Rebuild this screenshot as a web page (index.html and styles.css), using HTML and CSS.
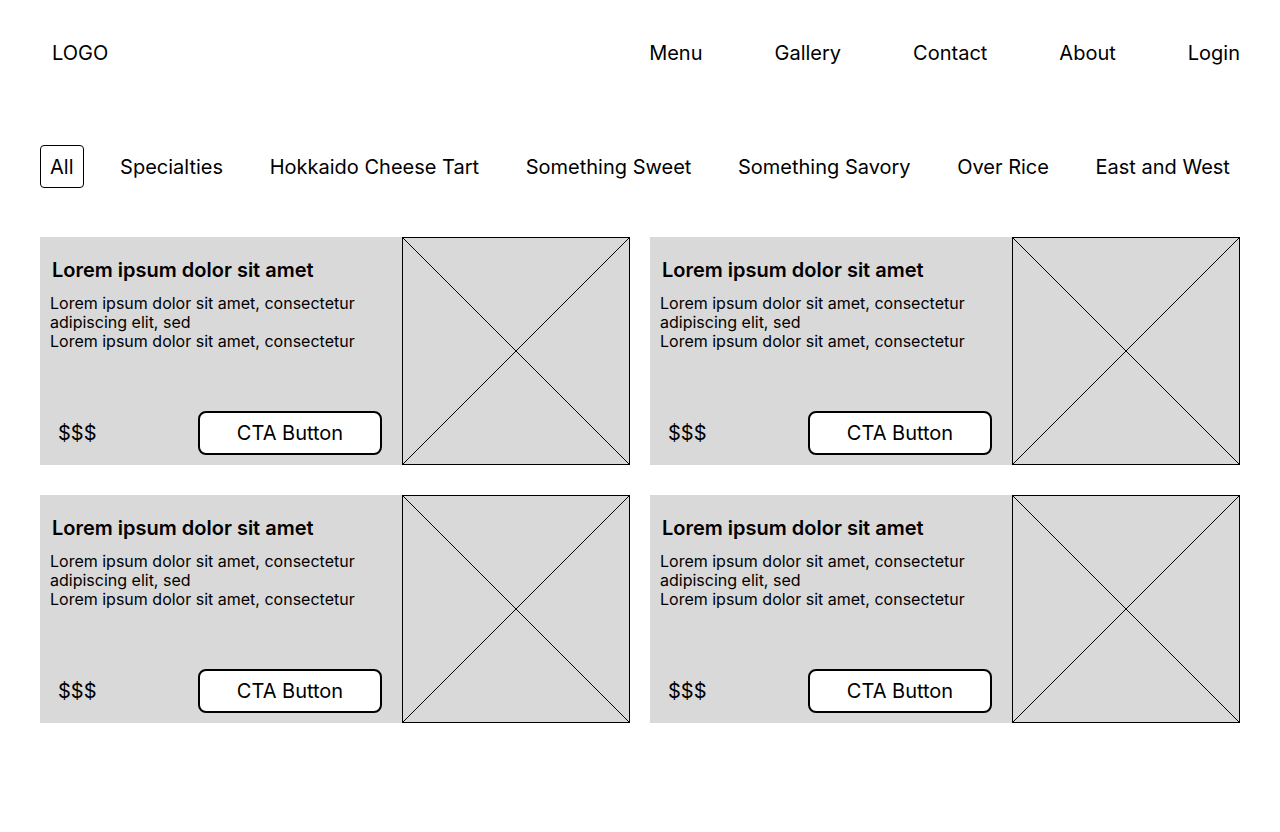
FILE: index.html
```html
<!DOCTYPE html>
<html lang="en">
<head>
<meta charset="utf-8">
<title>Menu</title>
<link rel="stylesheet" href="styles.css">
</head>
<body>
<div class="page">
  <header class="header">
    <div class="logo">LOGO</div>
    <nav class="nav">
      <a href="#">Menu</a>
      <a href="#">Gallery</a>
      <a href="#">Contact</a>
      <a href="#">About</a>
      <a href="#">Login</a>
    </nav>
  </header>

  <div class="filters">
    <span class="filter active">All</span>
    <span class="filter">Specialties</span>
    <span class="filter">Hokkaido Cheese Tart</span>
    <span class="filter">Something Sweet</span>
    <span class="filter">Something Savory</span>
    <span class="filter">Over Rice</span>
    <span class="filter">East and West</span>
  </div>

  <div class="grid">
    <div class="card">
      <div class="info">
        <h2 class="title">Lorem ipsum dolor sit amet</h2>
        <p class="desc">Lorem ipsum dolor sit amet, consectetur<br>adipiscing elit, sed<br>Lorem ipsum dolor sit amet, consectetur</p>
        <div class="foot"><span class="price">$$$</span><button class="cta">CTA Button</button></div>
      </div>
      <div class="pic"><svg viewBox="0 0 100 100" preserveAspectRatio="none"><line x1="0" y1="0" x2="100" y2="100"/><line x1="100" y1="0" x2="0" y2="100"/></svg></div>
    </div>
    <div class="card">
      <div class="info">
        <h2 class="title">Lorem ipsum dolor sit amet</h2>
        <p class="desc">Lorem ipsum dolor sit amet, consectetur<br>adipiscing elit, sed<br>Lorem ipsum dolor sit amet, consectetur</p>
        <div class="foot"><span class="price">$$$</span><button class="cta">CTA Button</button></div>
      </div>
      <div class="pic"><svg viewBox="0 0 100 100" preserveAspectRatio="none"><line x1="0" y1="0" x2="100" y2="100"/><line x1="100" y1="0" x2="0" y2="100"/></svg></div>
    </div>
    <div class="card">
      <div class="info">
        <h2 class="title">Lorem ipsum dolor sit amet</h2>
        <p class="desc">Lorem ipsum dolor sit amet, consectetur<br>adipiscing elit, sed<br>Lorem ipsum dolor sit amet, consectetur</p>
        <div class="foot"><span class="price">$$$</span><button class="cta">CTA Button</button></div>
      </div>
      <div class="pic"><svg viewBox="0 0 100 100" preserveAspectRatio="none"><line x1="0" y1="0" x2="100" y2="100"/><line x1="100" y1="0" x2="0" y2="100"/></svg></div>
    </div>
    <div class="card">
      <div class="info">
        <h2 class="title">Lorem ipsum dolor sit amet</h2>
        <p class="desc">Lorem ipsum dolor sit amet, consectetur<br>adipiscing elit, sed<br>Lorem ipsum dolor sit amet, consectetur</p>
        <div class="foot"><span class="price">$$$</span><button class="cta">CTA Button</button></div>
      </div>
      <div class="pic"><svg viewBox="0 0 100 100" preserveAspectRatio="none"><line x1="0" y1="0" x2="100" y2="100"/><line x1="100" y1="0" x2="0" y2="100"/></svg></div>
    </div>
  </div>
</div>
</body>
</html>
```
FILE: styles.css
```css
* { box-sizing: border-box; }
html, body { margin: 0; padding: 0; background: #fff; }
body {
  font-family: Inter, "Noto Sans", "Liberation Sans", sans-serif;
  color: #000;
}
.page { padding: 0 40px; }

.header {
  display: flex;
  justify-content: space-between;
  align-items: center;
  padding-top: 41px;
  font-size: 20px;
  line-height: 24px;
}
.logo { margin-left: 12px; }
.nav { display: flex; gap: 72px; }
.nav a { color: #000; text-decoration: none; }

.filters {
  display: flex;
  justify-content: space-between;
  margin-top: 80px;
  font-size: 20px;
  line-height: 22px;
}
.filter {
  padding: 10px 9px 9px;
  border: 1px solid transparent;
  border-radius: 4px;
}
.filter.active { border-color: #000; }

.grid {
  display: grid;
  grid-template-columns: 1fr 1fr;
  gap: 30px 20px;
  margin-top: 49px;
}
.card {
  display: flex;
  height: 228px;
  background: #d9d9d9;
}
.info {
  flex: 1;
  display: flex;
  flex-direction: column;
  padding: 21px 20px 10px 10px;
}
.title {
  margin: 0 0 12px 2px;
  font-size: 20px;
  line-height: 24px;
  font-weight: 600;
}
.desc {
  margin: 0;
  font-size: 16px;
  line-height: 19px;
}
.foot {
  margin-top: auto;
  display: flex;
  justify-content: space-between;
  align-items: center;
}
.price { margin-left: 8px; font-size: 20px; line-height: 24px; }
.cta {
  width: 184px;
  height: 44px;
  background: #fff;
  border: 2px solid #000;
  border-radius: 8px;
  font-family: inherit;
  font-size: 20px;
  color: #000;
  padding: 0;
}
.pic {
  width: 228px;
  height: 228px;
  border: 1px solid #000;
  flex-shrink: 0;
}
.pic svg { display: block; width: 100%; height: 100%; }
.pic line { stroke: #000; stroke-width: 1; vector-effect: non-scaling-stroke; }
```
